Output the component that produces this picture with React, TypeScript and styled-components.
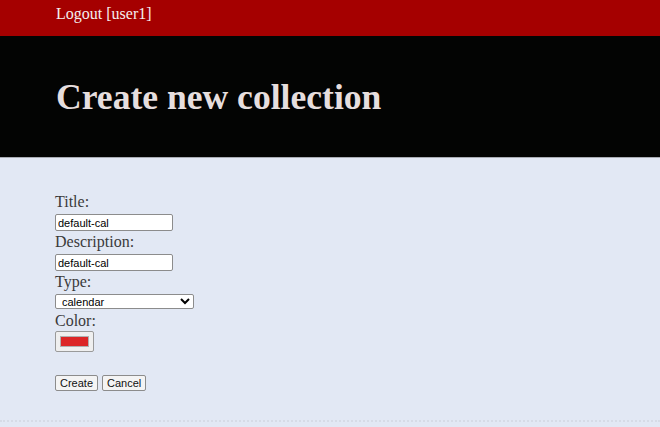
import styled, { createGlobalStyle } from "styled-components";

const GlobalStyle = createGlobalStyle`
html, body {
    margin: 0;
    padding: 0;
    background: #e2e8f4;
    font-family: "Liberation Serif", "Times New Roman", serif;
}
`

const TopBar = styled.div`
background: #a50000;
height: 36px;
padding: 2px 56px 0;
box-sizing: border-box;

a {
    color: #f4eeee;
    font-size: 16px;
    line-height: 24px;
    text-decoration: none;
}
`

const Banner = styled.div`
background: #030403;
height: 122px;
box-sizing: border-box;
border-bottom: 1px solid #a9acb3;
padding: 0 56px;
display: flex;
align-items: center;

h1 {
    margin: 0;
    color: #e6dede;
    font-size: 35.6px;
    font-weight: bold;
}
`

const Main = styled.div`
padding: 34px 55px 0;
height: 264px;
box-sizing: border-box;
border-bottom: 2px dotted #d6dbe6;
`

const Form = styled.form`
display: flex;
flex-direction: column;
align-items: flex-start;
`

const Label = styled.label`
color: #3a3a3a;
font-size: 16px;
line-height: 20px;
margin: 0 0 2px;
`

const TextInput = styled.input`
width: 118px;
height: 17px;
box-sizing: border-box;
border: 1px solid #8c8c8c;
border-radius: 2px;
background: white;
font-family: "Liberation Sans", Arial, sans-serif;
font-size: 11px;
padding: 0 2px;
margin: 0 0 1px;
`

const Select = styled.select`
width: 139px;
height: 15px;
box-sizing: border-box;
border: 1px solid #8c8c8c;
border-radius: 2px;
background: white;
font-family: "Liberation Sans", Arial, sans-serif;
font-size: 11px;
padding: 0 2px;
margin: 0 0 2px;
`

const Swatch = styled.div<{ color: string }>`
width: 39px;
height: 21px;
box-sizing: border-box;
border: 1px solid #9a9a9a;
border-radius: 2px;
background: #efefef;
padding: 4px 4px;
margin-top: -2px;

div {
    height: 100%;
    background: ${p => p.color};
    border: 1px solid #b0b0b0;
    box-sizing: border-box;
}
`

const Buttons = styled.div`
display: flex;
gap: 4px;
margin-top: 23px;
`

const Button = styled.button`
height: 16px;
box-sizing: border-box;
border: 1px solid #8c8c8c;
border-radius: 2px;
background: #f4f4f4;
font-family: "Liberation Sans", Arial, sans-serif;
font-size: 11px;
padding: 0 4px;
color: #111;
`

export default function App() {
    return (
        <>
            <GlobalStyle />
            <TopBar>
                <a href="#">Logout [user1]</a>
            </TopBar>
            <Banner>
                <h1>Create new collection</h1>
            </Banner>
            <Main>
                <Form>
                    <Label>Title:</Label>
                    <TextInput defaultValue="default-cal" />
                    <Label>Description:</Label>
                    <TextInput defaultValue="default-cal" />
                    <Label>Type:</Label>
                    <Select defaultValue="calendar">
                        <option value="calendar">calendar</option>
                        <option value="addressbook">addressbook</option>
                    </Select>
                    <Label>Color:</Label>
                    <Swatch color="#dc2626"><div /></Swatch>
                    <Buttons>
                        <Button type="button">Create</Button>
                        <Button type="button">Cancel</Button>
                    </Buttons>
                </Form>
            </Main>
        </>
    );
}
